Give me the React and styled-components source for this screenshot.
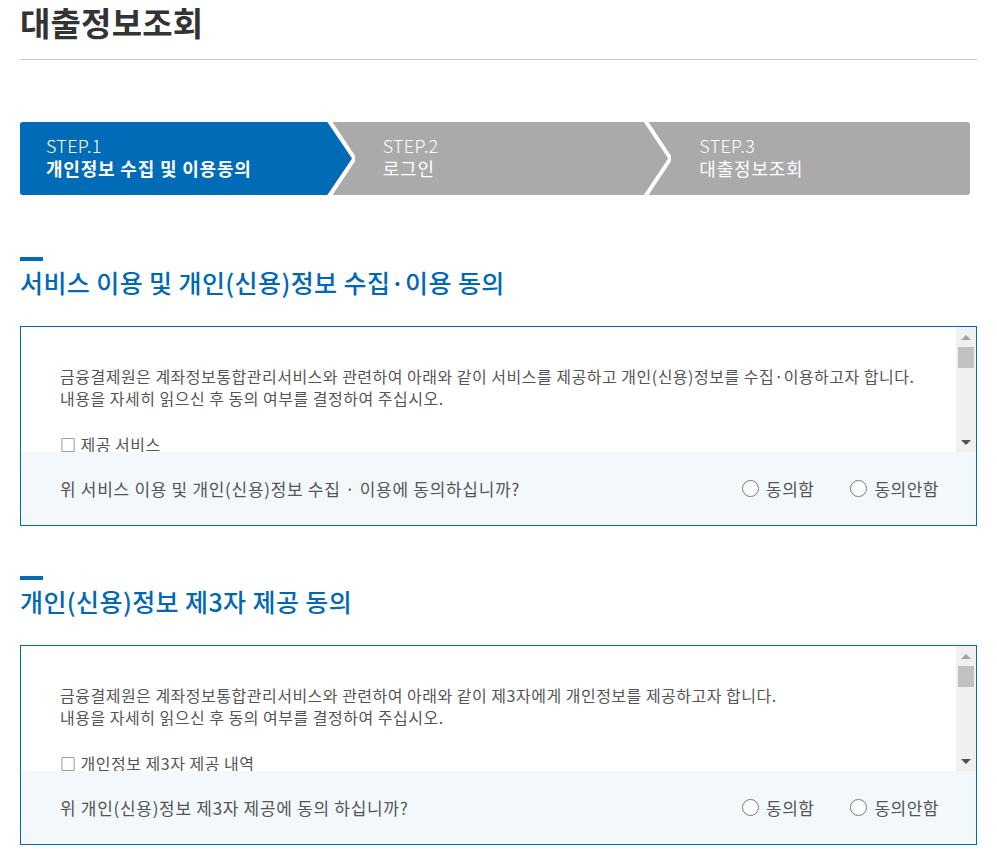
import React from 'react'
import styled, { createGlobalStyle } from 'styled-components'

const Global = createGlobalStyle`
  body {
    margin: 0;
    background: #fff;
    font-family: "Noto Sans CJK KR", "Noto Sans", sans-serif;
  }
  * { box-sizing: border-box; }
`

const BLUE = '#006bb6'
const GRAY = '#aaaaaa'

const Page = styled.div`
  width: 997px;
  padding: 0 20px 20px;
`

const Title = styled.h1`
  margin: 0;
  height: 60px;
  padding-top: 1px;
  line-height: 42px;
  font-size: 33px;
  font-weight: 700;
  color: #333;
  border-bottom: 1px solid #cccccc;
  letter-spacing: 0.2px;
`

const Steps = styled.ol`
  display: flex;
  width: 950px;
  height: 73px;
  margin: 62px 0 0;
  padding: 0;
  list-style: none;
  background: ${GRAY};
  border-radius: 3px;
`

const Step = styled.li`
  position: relative;
  width: calc(100% / 3);
  padding-left: ${p => (p.$first ? 26 : 46)}px;
  padding-top: 12px;
  background: ${p => (p.$active ? BLUE : 'transparent')};
  border-radius: ${p => (p.$first ? '3px 0 0 3px' : '0')};
  color: #fff;
  font-size: 18px;
  line-height: 23px;
  letter-spacing: 0.8px;
`

const StepNo = styled.div`
  font-weight: 300;
  letter-spacing: 0.3px;
`

const StepName = styled.div`
  font-weight: ${p => (p.$active ? 700 : 400)};
`

const Chevron = styled.svg`
  position: absolute;
  top: 0;
  right: -18px;
  width: 30px;
  height: 73px;
  z-index: 1;
`

const StepArrow = ({ active }) => (
  <Chevron viewBox="0 0 30 73">
    <rect x="0" y="0" width="30" height="73" fill={GRAY} />
    {active && <polygon points="0,0 2,0 27,36.5 2,73 0,73" fill={BLUE} />}
    <polyline points="4.5,-1 29.5,36.5 4.5,74" fill="none" stroke="#fff" strokeWidth="4" />
  </Chevron>
)

const Section = styled.section`
  margin-top: ${p => p.$gap}px;
`

const Heading = styled.h2`
  margin: 0;
  font-size: 25px;
  font-weight: 500;
  line-height: 34px;
  color: #0068b7;
  letter-spacing: 0.4px;
  &::before {
    content: '';
    display: block;
    width: 23px;
    height: 4px;
    background: ${BLUE};
    margin-bottom: 4px;
  }
`

const Box = styled.div`
  margin-top: 27px;
  border: 1px solid #0068b7;
`

const ScrollArea = styled.div`
  display: flex;
  height: 125px;
`

const Terms = styled.div`
  flex: 1;
  overflow: hidden;
  padding: 38px 20px 0 39px;
  font-size: 16px;
  line-height: 22px;
  letter-spacing: 0.5px;
  color: #555;
`

const Blank = styled.div`
  height: 24px;
`

const Scrollbar = styled.div`
  display: flex;
  flex-direction: column;
  align-items: center;
  width: 20px;
  background: #f0f0f0;
`

const ArrowBtn = styled.div`
  height: 20px;
  width: 100%;
  display: flex;
  align-items: center;
  justify-content: center;
  &::after {
    content: '';
    border-left: 5px solid transparent;
    border-right: 5px solid transparent;
    ${p => (p.$up
      ? 'border-bottom: 5px solid #a3a3a3;'
      : 'border-top: 5px solid #505050;')}
  }
`

const Thumb = styled.div`
  width: 16px;
  height: 21px;
  background: #c1c1c1;
`

const Spacer = styled.div`
  flex: 1;
`

const Answer = styled.div`
  display: flex;
  align-items: center;
  justify-content: space-between;
  height: 73px;
  padding: 0 37px 0 39px;
  background: #f2f8fc;
  font-size: 17px;
  letter-spacing: 0.7px;
  color: #555;
`

const Options = styled.div`
  display: flex;
  gap: 36px;
`

const Option = styled.label`
  display: flex;
  align-items: center;
  gap: 7px;
  letter-spacing: 0.5px;
  &::before {
    content: '';
    width: 15px;
    height: 15px;
    border: 1px solid #777;
    border-radius: 50%;
    background: #fff;
  }
`

const Agreement = ({ gap, title, lines, item, question }) => (
  <Section $gap={gap}>
    <Heading>{title}</Heading>
    <Box>
      <ScrollArea>
        <Terms>
          {lines.map(l => <div key={l}>{l}</div>)}
          <Blank />
          <div>□ {item}</div>
        </Terms>
        <Scrollbar>
          <ArrowBtn $up />
          <Thumb />
          <Spacer />
          <ArrowBtn />
        </Scrollbar>
      </ScrollArea>
      <Answer>
        <span>{question}</span>
        <Options>
          <Option>동의함</Option>
          <Option>동의안함</Option>
        </Options>
      </Answer>
    </Box>
  </Section>
)

const steps = [
  { no: 'STEP.1', name: '개인정보 수집 및 이용동의' },
  { no: 'STEP.2', name: '로그인' },
  { no: 'STEP.3', name: '대출정보조회' },
]

export default function App() {
  return (
    <Page>
      <Global />
      <Title>대출정보조회</Title>
      <Steps>
        {steps.map((s, i) => (
          <Step key={s.no} $first={i === 0} $active={i === 0}>
            <StepNo>{s.no}</StepNo>
            <StepName $active={i === 0}>{s.name}</StepName>
            {i < steps.length - 1 && <StepArrow active={i === 0} />}
          </Step>
        ))}
      </Steps>
      <Agreement
        gap={62}
        title="서비스 이용 및 개인(신용)정보 수집·이용 동의"
        lines={[
          '금융결제원은 계좌정보통합관리서비스와 관련하여 아래와 같이 서비스를 제공하고 개인(신용)정보를 수집·이용하고자 합니다.',
          '내용을 자세히 읽으신 후 동의 여부를 결정하여 주십시오.',
        ]}
        item="제공 서비스"
        question="위 서비스 이용 및 개인(신용)정보 수집 · 이용에 동의하십니까?"
      />
      <Agreement
        gap={50}
        title="개인(신용)정보 제3자 제공 동의"
        lines={[
          '금융결제원은 계좌정보통합관리서비스와 관련하여 아래와 같이 제3자에게 개인정보를 제공하고자 합니다.',
          '내용을 자세히 읽으신 후 동의 여부를 결정하여 주십시오.',
        ]}
        item="개인정보 제3자 제공 내역"
        question="위 개인(신용)정보 제3자 제공에 동의 하십니까?"
      />
    </Page>
  )
}
